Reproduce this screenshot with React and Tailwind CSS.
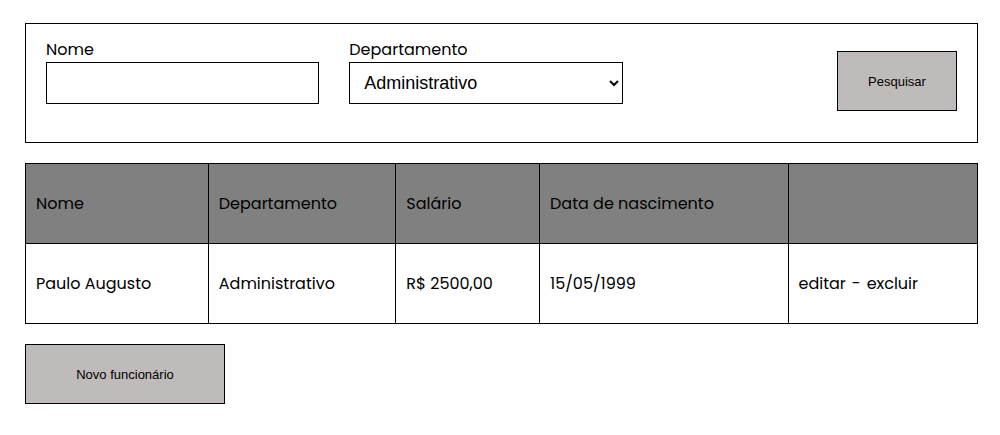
const employees = [
  {
    name: "Paulo Augusto",
    department: "Administrativo",
    salary: "R$ 2500,00",
    birthDate: "15/05/1999",
  },
];

const cell = "h-20 border border-black px-[10px] py-0 text-left font-normal";
const button =
  "h-[60px] cursor-pointer border border-black bg-[#bfbbba] font-['Liberation_Sans',Arial,sans-serif] text-[13px] leading-[normal]";
const field =
  "h-[42px] w-full rounded-none border border-black bg-white px-[10px] font-['Liberation_Sans',Arial,sans-serif] text-[18px] leading-[normal]";

function SearchForm() {
  return (
    <form
      className="flex min-h-[120px] items-center gap-[30px] border border-black px-5 pb-1"
      onSubmit={(event) => event.preventDefault()}
    >
      <div className="w-[30%] pb-5">
        <label htmlFor="name" className="block">
          Nome
        </label>
        <input id="name" type="text" className={field} />
      </div>
      <div className="w-[30%] pb-5">
        <label htmlFor="department" className="block">
          Departamento
        </label>
        <select id="department" className={field}>
          <option>Administrativo</option>
        </select>
      </div>
      <button type="submit" className={`${button} ml-auto w-[120px]`}>
        Pesquisar
      </button>
    </form>
  );
}

function EmployeeTable() {
  return (
    <table className="w-full table-fixed border-collapse">
      <colgroup>
        <col className="w-[19.2%]" />
        <col className="w-[19.7%]" />
        <col className="w-[15.1%]" />
        <col className="w-[26.1%]" />
        <col className="w-[19.9%]" />
      </colgroup>
      <thead className="bg-[#808080]">
        <tr>
          <th className={cell}>Nome</th>
          <th className={cell}>Departamento</th>
          <th className={cell}>Salário</th>
          <th className={cell}>Data de nascimento</th>
          <th className={cell}></th>
        </tr>
      </thead>
      <tbody>
        {employees.map((employee) => (
          <tr key={employee.name}>
            <td className={cell}>{employee.name}</td>
            <td className={cell}>{employee.department}</td>
            <td className={cell}>{employee.salary}</td>
            <td className={cell}>{employee.birthDate}</td>
            <td className={cell}>
              <div className="flex gap-[6px]">
                <a href="#editar">editar</a>
                <span>-</span>
                <a href="#excluir">excluir</a>
              </div>
            </td>
          </tr>
        ))}
      </tbody>
    </table>
  );
}

export default function App() {
  return (
    <main className="flex flex-col gap-5 pt-[23px] pr-[22px] pb-[31px] pl-[25px] font-[Poppins,Inter,sans-serif] text-[16px] leading-6 text-black">
      <SearchForm />
      <EmployeeTable />
      <button type="button" className={`${button} w-[200px]`}>
        Novo funcionário
      </button>
    </main>
  );
}
